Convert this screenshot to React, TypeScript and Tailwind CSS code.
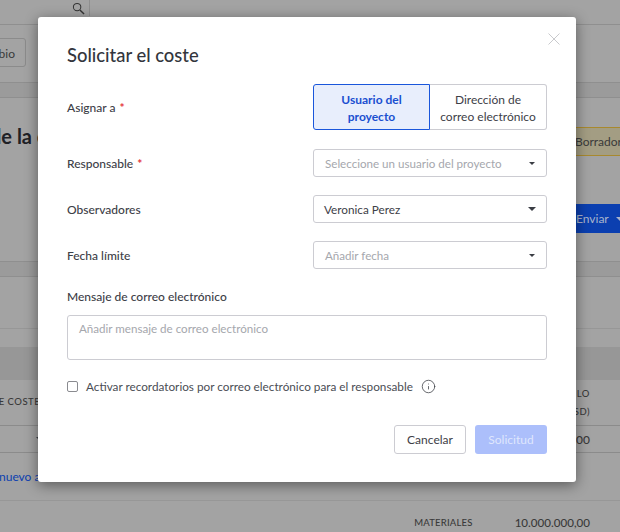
import { Info } from 'lucide-react'

const font = { fontFamily: 'Lato, sans-serif' }

function Caret({ size = 'md', color = '#3a3d44' }: { size?: 'md' | 'sm'; color?: string }) {
  return (
    <svg width={size === 'md' ? 8 : 6} height={size === 'md' ? 4 : 3} viewBox="0 0 10 5" preserveAspectRatio="none" className="shrink-0">
      <path d="M0 0h10L5 5z" fill={color} />
    </svg>
  )
}

function Label({ text, required }: { text: string; required?: boolean }) {
  return (
    <div className="flex items-center pt-[2px] text-[12px] font-medium text-[#3d4047]">
      {text}
      {required && <span className="ml-[4px] -mt-[1px] text-[12px] font-bold text-[#e5343d]">*</span>}
    </div>
  )
}

function SelectBox({ text, placeholder }: { text: string; placeholder?: boolean }) {
  return (
    <div
      className={`flex h-[28px] w-[234px] items-center justify-between rounded-[3px] border border-[#ccccd2] bg-white ${
        placeholder ? 'pl-[11px] pr-[11px] text-[11.6px] text-[#a5a7ad]' : 'pl-[10px] pr-[10px] text-[11.75px] text-[#3d4047]'
      }`}
    >
      <span className="pt-[1px]">{text}</span>
      <Caret size={placeholder ? 'sm' : 'md'} />
    </div>
  )
}

function Backdrop() {
  return (
    <div className="flex h-[532px] flex-col overflow-hidden bg-[#a3a3a3] text-[#3a3a3a]">
      <div className="h-[25px] shrink-0 border-b border-[#8f8f8f]">
        <div className="ml-[70px] flex h-[16px] w-[20px] items-center justify-start border-r border-[#8f8f8f] pl-[2px]">
          <svg width="13" height="13" viewBox="0 0 14 14" fill="none" stroke="#333" strokeWidth="1.1">
            <circle cx="5.5" cy="5.5" r="4" />
            <path d="M8.5 8.5L13 13" strokeWidth="1.5" />
          </svg>
        </div>
      </div>
      <div className="h-[58px] shrink-0 border-b border-[#8f8f8f] pt-[13px]">
        <div className="-ml-[20px] flex h-[29px] w-[46px] items-center justify-end rounded-[3px] border border-[#8b8b8b] pr-[10px] pt-[3px] text-[12px]">
          bio
        </div>
      </div>
      <div className="h-[15px] shrink-0 border-b border-[#8f8f8f] bg-[#9b9b9b]" />
      <div className="relative h-[164px] shrink-0 border-b border-[#8f8f8f]">
        <div className="-ml-[10px] pt-[25px] text-[20px] font-bold leading-[26px] text-[#1f2126]">de la c</div>
        <div className="absolute left-[575px] top-[29px] flex h-[29px] w-[60px] items-center border-y border-[#a8892e] bg-[#a39d83] pt-[1px] text-[12px]">
          Borrador
        </div>
        <div className="absolute left-[576px] top-[106px] flex h-[29px] w-[50px] items-center gap-[7px] bg-[#0b3fb0] text-[12px] text-[#a9b4cc]">
          Enviar
          <Caret size="md" color="#a9b4cc" />
        </div>
      </div>
      <div className="h-[15px] shrink-0 border-b border-[#8f8f8f] bg-[#9b9b9b]" />
      <div className="h-[52px] shrink-0 border-b border-[#979797]" />
      <div className="h-[19px] shrink-0 border-b border-[#979797]" />
      <div className="h-[32px] shrink-0 border-b border-[#979797] bg-[#979797]" />
      <div className="flex h-[46px] shrink-0 items-center justify-between border-b border-[#8b8b8b] text-[9.5px] font-medium tracking-[0.5px]">
        <span className="-ml-[9px]">DE COSTE</span>
        <span className="flex flex-col pr-[30px] text-right leading-[18px]">
          <span>ILO</span>
          <span>SD)</span>
        </span>
      </div>
      <div className="flex h-[27px] shrink-0 items-center justify-between border-b border-[#8b8b8b] pr-[30px]">
        <span className="ml-[36px]">
          <Caret size="md" />
        </span>
        <span className="pt-[2px] text-[12px] font-medium">00</span>
      </div>
      <div className="flex h-[48px] shrink-0 items-center border-b border-[#979797] pt-[1px] text-[12px] text-[#0b3fb0]">
        <span className="-ml-[1px]">nuevo archivo</span>
      </div>
      <div className="flex h-[30px] shrink-0 items-center justify-end pr-[30px] pt-[14px]">
        <span className="mr-[42px] text-[9.5px] font-medium tracking-[0.2px]">MATERIALES</span>
        <span className="text-[11.6px] font-medium">10.000.000,00</span>
      </div>
    </div>
  )
}

export default function App() {
  return (
    <div className="relative h-[532px] w-[620px] overflow-hidden" style={font}>
      <Backdrop />
      <div className="absolute left-[38px] top-[17px] flex h-[465px] w-[538px] flex-col rounded-[3px] bg-white px-[29px] shadow-[0_3px_14px_rgba(0,0,0,0.45)]">
        <svg width="12" height="12" viewBox="0 0 12 12" fill="none" stroke="#c9cacd" strokeWidth="1" className="absolute right-[16px] top-[16px]">
          <path d="M0.5 0.5l11 11M11.5 0.5L0.5 11.5" />
        </svg>

        <h1 className="mt-[27px] text-[18.4px] font-medium leading-[22px] text-[#33363d]">Solicitar el coste</h1>

        <div className="mt-[18px] flex items-center justify-between">
          <Label text="Asignar a" required />
          <div className="flex h-[46px] w-[234px] rounded-[3px] text-[12px] leading-[17px]">
            <div className="flex w-[117px] items-center justify-center rounded-l-[3px] border border-[#1a56db] bg-[#e8eefc] pt-[1px] text-center font-bold text-[#1a4fd0]">
              Usuario del
              <br />
              proyecto
            </div>
            <div className="flex flex-1 items-center justify-center rounded-r-[3px] border border-l-0 border-[#ccccd2] pt-[1px] text-center text-[#3d4047]">
              Dirección de
              <br />
              correo electrónico
            </div>
          </div>
        </div>

        <div className="mt-[19px] flex items-center justify-between">
          <Label text="Responsable" required />
          <SelectBox text="Seleccione un usuario del proyecto" placeholder />
        </div>
        <div className="mt-[18px] flex items-center justify-between">
          <Label text="Observadores" />
          <SelectBox text="Veronica Perez" />
        </div>
        <div className="mt-[18px] flex items-center justify-between">
          <Label text="Fecha límite" />
          <SelectBox text="Añadir fecha" placeholder />
        </div>

        <div className="mt-[17px]">
          <Label text="Mensaje de correo electrónico" />
        </div>
        <div className="mt-[9px] h-[45px] rounded-[3px] border border-[#ccccd2] px-[11px] pt-[5px] text-[11.6px] leading-[16px] text-[#a5a7ad]">
          Añadir mensaje de correo electrónico
        </div>

        <div className="mt-[18px] flex items-center text-[11.75px] text-[#4a4d54]">
          <span className="h-[11px] w-[11px] rounded-[2px] border border-[#8a8b90]" />
          <span className="ml-[8px]">Activar recordatorios por correo electrónico para el responsable</span>
          <Info size={15} strokeWidth={1.25} className="ml-[8px] text-[#3d4047]" />
        </div>

        <div className="mt-[29px] flex justify-end gap-[9px] text-[12px]">
          <div className="flex h-[29px] w-[72px] items-center justify-center rounded-[3px] border border-[#ccccd2] pt-[1px] text-[#3d4047]">Cancelar</div>
          <div className="flex h-[29px] w-[72px] items-center justify-center rounded-[3px] bg-[#acbffb] pt-[1px] text-[#dfe6fd]">Solicitud</div>
        </div>
      </div>
    </div>
  )
}
